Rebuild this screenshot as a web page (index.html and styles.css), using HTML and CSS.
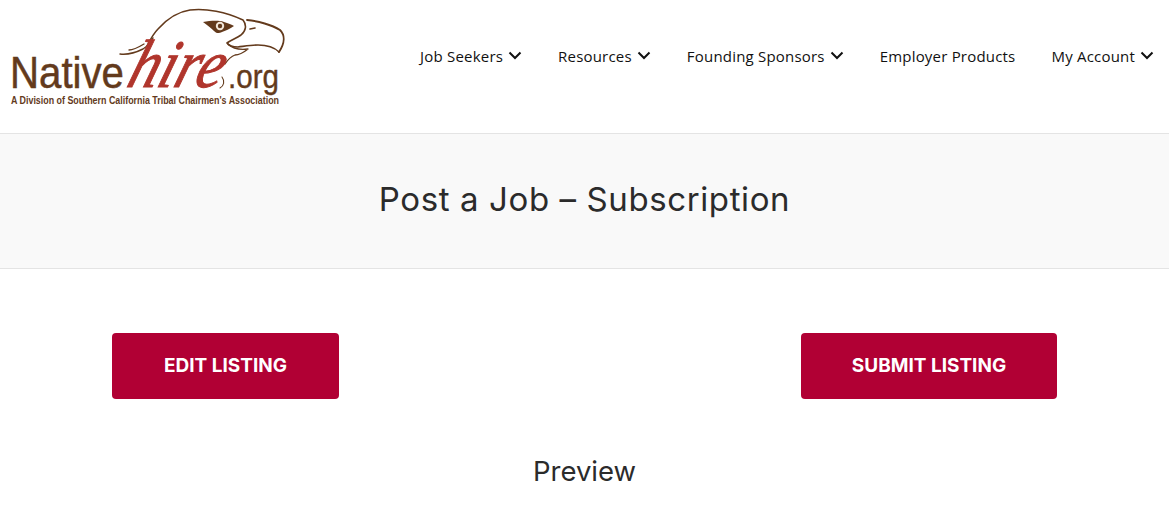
FILE: index.html
```html
<!DOCTYPE html>
<html lang="en">
<head>
    <meta charset="UTF-8">
    <meta name="viewport" content="width=device-width, initial-scale=1.0">
    <title>Post a Job - Subscription</title>
    <link rel="stylesheet" href="styles.css">
</head>
<body>
    <header class="site-header">
        <a class="logo" href="#">
            <svg class="logo-img" viewBox="0 0 330 120" width="330" height="120">
                <g fill="none" stroke="#633a1c" stroke-linecap="round" stroke-linejoin="round">
                    <path stroke-width="1.6" d="M147 46 C150 40 153 34 158 29 C166 20 176 12 190 10 C206 8 226 12 243 20 C247 25 246 31 241 35 C237 38 231 40 227 43 C229 46 233 47 238 47 C246 46 252 45 258 45 C266 45 274 47 279 52"/>
                    <path stroke-width="1.9" d="M247 20 C258 21 272 25 280 30 C285 35 285 43 279 52"/>
                    <path stroke-width="1.3" d="M228 44 C232 48 240 50 248 49 C243 53 238 55 235 55 C232 56 229 58 225 64"/>
                    <path stroke-width="1.4" d="M120 54 C128 55 137 52 143 49 C148 46 151 42 153 38"/>
                    <path stroke-width="1.3" d="M129 50 C134 50 139 47 144 44"/>
                    <path stroke-width="1.6" d="M250 29 L255 28"/>
                    <path stroke-width="1.1" d="M222 77 C225 81 224 86 220 88"/>
                </g>
                <path fill="#633a1c" d="M203 22 C210 21 218 20 224 22 C228 23 232 25 234 26 C230 29 225 31 222 32 C218 34 216 33 214 31 C211 28 207 25 203 22 Z"/>
                <circle cx="220" cy="26" r="4.2" fill="#f1e6d8"/>
                <circle cx="220" cy="26" r="2.2" fill="#633a1c"/>
                <text class="logo-native" x="10" y="88" textLength="114" lengthAdjust="spacingAndGlyphs">Native</text>
                <text class="logo-hire" transform="translate(125 87) skewX(-18)" textLength="94" lengthAdjust="spacingAndGlyphs">hire</text>
                <text class="logo-org" x="228" y="88" textLength="51" lengthAdjust="spacingAndGlyphs">.org</text>
                <text class="logo-tag" x="11" y="104" textLength="268" lengthAdjust="spacingAndGlyphs">A Division of Southern California Tribal Chairmen's Association</text>
            </svg>
        </a>
        <nav class="main-nav">
            <a href="#">Job Seekers <svg class="caret" viewBox="0 0 14 9"><path d="M1.5 1.5 7 7l5.500-5.500"/></svg></a>
            <a href="#">Resources <svg class="caret" viewBox="0 0 14 9"><path d="M1.5 1.5 7 7l5.500-5.500"/></svg></a>
            <a href="#">Founding Sponsors <svg class="caret" viewBox="0 0 14 9"><path d="M1.5 1.5 7 7l5.500-5.500"/></svg></a>
            <a href="#">Employer Products</a>
            <a href="#">My Account <svg class="caret" viewBox="0 0 14 9"><path d="M1.5 1.5 7 7l5.500-5.500"/></svg></a>
        </nav>
    </header>

    <section class="page-title">
        <h1>Post a Job – Subscription</h1>
    </section>

    <main class="content">
        <div class="actions">
            <a class="btn btn-edit" href="#">EDIT LISTING</a>
            <a class="btn btn-submit" href="#">SUBMIT LISTING</a>
        </div>
        <h2 class="preview-title">Preview</h2>
    </main>
</body>
</html>
```

FILE: styles.css
```css
html, body {margin: 0; padding: 0; overflow: hidden;}
body {font-family: "Open Sans", "Liberation Sans", sans-serif; color: #2b2b2b; background: #ffffff;}
a {text-decoration: none; color: inherit;}

.site-header {display: flex; justify-content: space-between; align-items: flex-start; height: 133px; border-bottom: 1px solid #e4e4e4; padding-right: 15px;}
.logo {display: block; height: 120px;}
.logo-img {display: block;}
.logo-native {font: 45px "Liberation Sans", sans-serif; fill: #633a1c; stroke: #633a1c; stroke-width: 0.5px;}
.logo-hire {font: italic 68px "Liberation Serif", serif; fill: #b0352c; stroke: #b0352c; stroke-width: 1px;}
.logo-org {font: 33px "Liberation Sans", sans-serif; fill: #633a1c; stroke: #633a1c; stroke-width: 0.4px;}
.logo-tag {font: bold 10.5px "Liberation Sans", sans-serif; fill: #633a1c;}

.main-nav {display: flex; gap: 36px; font-size: 15px; letter-spacing: 0.2px; color: #111111; padding-top: 45px;}
.main-nav a {display: flex; align-items: center; gap: 5px; height: 21px; white-space: nowrap;}
.caret {width: 14px; height: 9px; fill: none; stroke: #111111; stroke-width: 2;}

.page-title {height: 134px; background: #f9f9f9; border-bottom: 1px solid #e4e4e4; display: flex; align-items: center; justify-content: center;}
.page-title h1 {margin: 0 0 4px; font-family: Inter, "Open Sans", sans-serif; font-size: 33px; font-weight: 400; letter-spacing: 0.6px; color: #2b2b2b;}

.content {padding: 64px 112px 0;}
.actions {display: flex; justify-content: space-between;}
.btn {display: flex; align-items: center; justify-content: center; height: 64px; padding-bottom: 2px; background: #b10034; color: #ffffff; border-radius: 4px; font-family: Inter, "Open Sans", sans-serif; font-weight: 700; font-size: 19px;}
.btn-edit {width: 227px;}
.btn-submit {width: 256px;}
.preview-title {margin: 55px 0 0; text-align: center; font-family: Inter, "Open Sans", sans-serif; font-size: 27.5px; font-weight: 400; color: #2b2b2b;}
```
